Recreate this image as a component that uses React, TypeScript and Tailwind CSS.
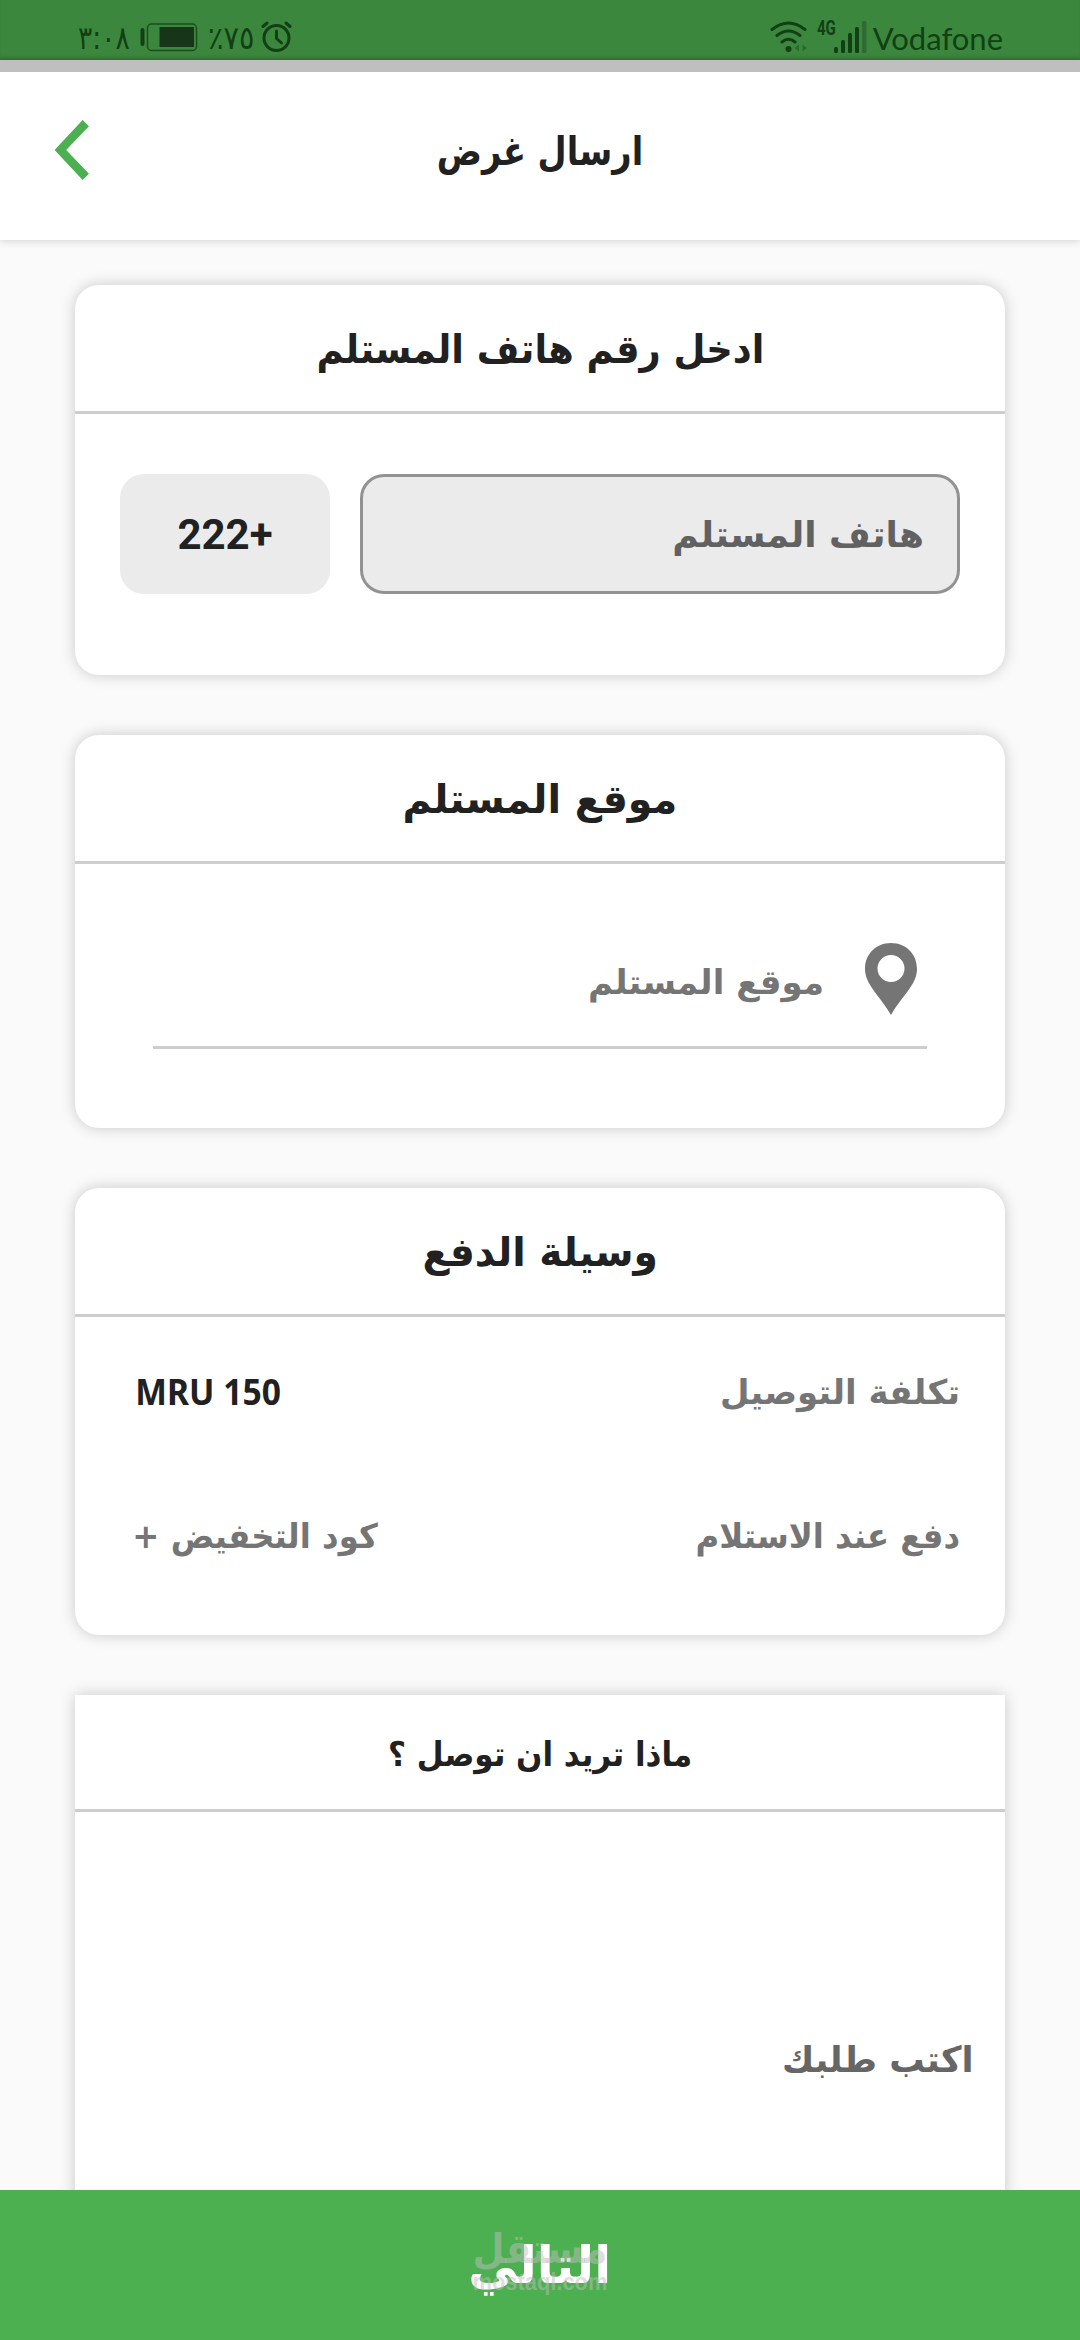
import type { ReactNode } from 'react'
import { clsx } from 'clsx'

function StatusBar() {
  return (
    <div
      dir="ltr"
      className="flex h-[60px] shrink-0 items-start justify-between bg-[#3c873e] pr-[77px] pl-[78px] text-[#123f14] shadow-[inset_0_-3px_3px_-1px_rgba(0,0,0,0.15)]"
    >
      <div className="flex h-full items-start">
        <span className="mt-[19px] w-[62px] origin-left scale-x-[0.83] text-[32px] leading-[38px] whitespace-nowrap">٣:٠٨</span>
        <svg className="mt-[23px] h-[30px] w-[58px]" viewBox="0 0 58 30">
          <rect x="0.5" y="5" width="4" height="18" rx="2" fill="#123f14" />
          <rect x="7.5" y="1" width="49" height="26.500" rx="4" fill="none" stroke="#1b4d1d" strokeWidth="1.500" />
          <rect x="19.500" y="4" width="34.500" height="20" fill="#183519" />
        </svg>
        <span className="mt-[19px] ml-[10px] w-[50px] origin-left scale-x-[0.9] text-[32px] leading-[38px] whitespace-nowrap">٪٧٥</span>
        <svg className="mt-[20px] ml-[3px] h-[34px] w-[32px]" viewBox="0 0 32 34" fill="none" stroke="#123f14">
          <circle cx="15.500" cy="18" r="12.500" strokeWidth="3" />
          <path d="M15.500 11v7.500l5 4.500" strokeWidth="3" strokeLinecap="round" strokeLinejoin="round" />
          <path d="M2 6.500l4-3.500M29 6.500l-4-3.500" strokeWidth="3" strokeLinecap="round" />
        </svg>
      </div>
      <div className="flex h-full items-start">
        <svg className="mt-[20px] h-[34px] w-[38px]" viewBox="0 0 38 34" fill="none" stroke="#123f14" strokeWidth="3" strokeLinecap="round">
          <path d="M2 9.500Q18.500-3.500 35 9.500M7 15.500Q18.500 6.500 30 15.500M12 22Q18.500 16.500 25 22" />
          <circle cx="18.500" cy="29" r="3" fill="#123f14" stroke="none" />
          <path d="M29 24.500v7l-4.500-3.500zM32.500 24.500v7l4.500-3.500z" fill="#2c6a2f" stroke="none" />
        </svg>
        <span className="mt-[19px] ml-[9px] w-[17px] origin-left scale-x-75 font-['Roboto',sans-serif] text-[20px] leading-[18px] font-bold">4G</span>
        <svg className="mt-[21px] h-[33px] w-[34px]" viewBox="0 0 34 33" fill="#123f14">
          <rect x="0" y="26" width="4" height="6" rx="1.500" />
          <rect x="7" y="19" width="4" height="13" rx="1.500" />
          <rect x="14" y="12" width="4" height="20" rx="1.500" />
          <rect x="21" y="6" width="4" height="26" rx="1.500" />
          <rect x="28" y="0" width="4.500" height="32" rx="1.500" fill="#2d6c30" />
        </svg>
        <span className="mt-[19px] ml-[5px] font-['Lato',sans-serif] text-[31px] leading-[38px]">Vodafone</span>
      </div>
    </div>
  )
}

function Header() {
  return (
    <header className="relative z-10 grid h-[180px] shrink-0 grid-cols-3 items-center border-t-[12px] border-[#bfbfbf] bg-white shadow-[0_1px_8px_rgba(0,0,0,0.17)]">
      <span />
      <h1 className="scale-x-[0.84] pb-[11px] text-center text-[40px] font-bold">ارسال غرض</h1>
      <svg className="mr-auto -mt-[12px] ml-[54px] h-[60px] w-[36px]" viewBox="0 0 37 62">
        <path d="M29.500 0L36 6.500L12.500 31L36 55.500L29.500 62L0.500 31z" fill="#4caf50" />
      </svg>
    </header>
  )
}

interface CardProps {
  title: string
  titleClassName?: string
  square?: boolean
  className?: string
  children: ReactNode
}

function Card({ title, titleClassName, square, className, children }: CardProps) {
  return (
    <section
      className={clsx(
        'flex shrink-0 flex-col bg-white shadow-[0_0_15px_rgba(0,0,0,0.2)]',
        !square && 'rounded-3xl',
        className
      )}
    >
      <h2
        className={clsx(
          'flex items-center justify-center border-b-[3px] border-[#cdcdcd] font-bold',
          square ? 'h-[117px] pt-[5px] text-[34px]' : 'h-[129px] pt-[2px] text-[40px]'
        )}
      >
        <span className={titleClassName}>{title}</span>
      </h2>
      {children}
    </section>
  )
}

export default function App() {
  return (
    <div
      dir="rtl"
      className="flex h-[2340px] w-[1080px] flex-col overflow-hidden bg-[#fafafa] font-['DejaVu_Sans',sans-serif] text-[#212121]"
    >
      <StatusBar />
      <Header />

      <main className="flex h-[1950px] shrink-0 flex-col gap-[60px] overflow-hidden px-[75px] pt-[45px]">
        <Card title="ادخل رقم هاتف المستلم" titleClassName="scale-x-[0.92]" className="h-[390px]">
          <div className="flex gap-[30px] px-[45px] pt-[60px]">
            <div className="flex h-[120px] w-[600px] items-center rounded-3xl border-[3px] border-[#929292] bg-[#ebebeb] px-[33px] pt-[2px] text-[36px] font-bold text-[#616161]">
              هاتف المستلم
            </div>
            <div className="flex h-[120px] w-[210px] items-center justify-center rounded-3xl bg-[#ebebeb] font-['Roboto',sans-serif] text-[42px] font-bold">
              +222
            </div>
          </div>
        </Card>

        <Card title="موقع المستلم" titleClassName="scale-x-[0.99]" className="h-[393px]">
          <div className="mx-[78px] mt-[54px] flex h-[131px] items-center border-b-[3px] border-[#cdcdcd] pr-[10px] text-[34px] font-bold text-[#757575]">
            <svg className="mb-[6px] ml-[41px] h-[72px] w-[52px]" viewBox="0 0 52 72" fill="#757575" fillRule="evenodd">
              <path d="M26 0C11 0 0 11 0 26C0 42 16 54 26 72C36 54 52 42 52 26C52 11 41 0 26 0zM26 12a13.500 13.500 0 1 1 0 27a13.500 13.500 0 1 1 0-27z" />
            </svg>
            موقع المستلم
          </div>
        </Card>

        <Card title="وسيلة الدفع" titleClassName="scale-x-[0.98]" className="h-[447px]">
          <div className="grid grid-cols-2 gap-y-[90px] px-[45px] pt-[48px] text-[34px] leading-[54px] font-bold text-[#757575]">
            <span>تكلفة التوصيل</span>
            <span className="origin-left scale-x-[0.96] pl-[16px] text-left font-['Noto_Sans',sans-serif] text-[35px] text-[#212121]">MRU 150</span>
            <span className="origin-right scale-x-[0.95]">دفع عند الاستلام</span>
            <span className="origin-left scale-x-[0.95] pl-[13px] text-left">كود التخفيض +</span>
          </div>
        </Card>

        <Card title="ماذا تريد ان توصل ؟" titleClassName="scale-x-[0.91]" square className="h-[600px]">
          <div className="origin-right scale-x-[0.98] px-[32px] pt-[221px] text-[36px] font-bold text-[#666]">اكتب طلبك</div>
        </Card>
      </main>

      <button className="relative flex h-[150px] shrink-0 items-center justify-center bg-[#4caf50] text-[51px] font-bold text-white">
        <span className="scale-x-[0.97] pt-[2px]">التالي</span>
        {/* watermark */}
        <span className="absolute inset-x-0 top-[37px] flex flex-col items-center text-[#bdbdbd]/50">
          <span className="scale-x-[0.9] text-[41px] leading-[44px]">مستقل</span>
          <span className="scale-x-[0.95] font-['Liberation_Sans',sans-serif] text-[23px] leading-[22px]">mostaql.com</span>
        </span>
      </button>
    </div>
  )
}
